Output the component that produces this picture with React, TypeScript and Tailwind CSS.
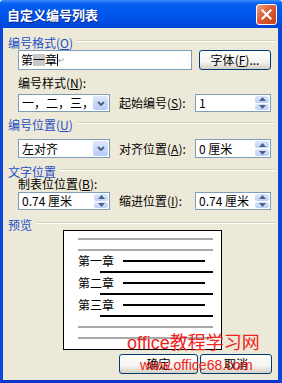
import React from "react"

type Mn = { text: string; k?: string; colon?: boolean }

const Label = ({ text, k, colon }: Mn) => (
  <span className="whitespace-nowrap text-[12px] leading-none">
    {text}
    {k && (
      <>
        (<u>{k}</u>)
      </>
    )}
    {colon && ":"}
  </span>
)

const GroupHead = ({ text, k }: Mn) => (
  <div className="flex h-full items-center pl-[5px] pr-[3px]">
    <span className="text-[#1c4ec6]">
      <Label text={text} k={k} />
    </span>
    <div className="ml-[4px] h-[2px] flex-1 border-t border-b border-t-[#d2cfbd] border-b-white" />
  </div>
)

const Arrow = ({ up }: { up?: boolean }) => (
  <svg width="7" height="4" viewBox="0 0 7 4">
    <path d={up ? "M0 4 L3.5 0 L7 4 Z" : "M0 0 L3.5 4 L7 0 Z"} fill="#4d6185" />
  </svg>
)

const Spin = ({ value, w }: { value: string; w: string }) => (
  <div className={`flex h-full border border-[#7f9db9] bg-white ${w}`}>
    <span className="flex flex-1 items-center pl-[3px] text-[12px] leading-none">{value}</span>
    <div className="m-[1px] flex w-[14px] flex-col gap-[1px]">
      <div className="flex flex-1 items-center justify-center rounded-[2px] bg-[linear-gradient(180deg,#dce6fd,#bcd0f9)]">
        <Arrow up />
      </div>
      <div className="flex flex-1 items-center justify-center rounded-[2px] bg-[linear-gradient(180deg,#dce6fd,#bcd0f9)]">
        <Arrow />
      </div>
    </div>
  </div>
)

const Select = ({ value }: { value: string }) => (
  <div className="flex h-full w-[92px] border border-[#7f9db9] bg-white">
    <span className="flex flex-1 items-center overflow-hidden whitespace-nowrap pl-[3px] text-[12px] leading-none">
      {value}
    </span>
    <div className="m-[1px] flex w-[15px] items-center justify-center rounded-[2px] bg-[linear-gradient(180deg,#dfe8fd,#b7cbf7)]">
      <svg width="8" height="5" viewBox="0 0 8 5">
        <path d="M1 1 L4 4 L7 1" stroke="#4d6185" strokeWidth="2" fill="none" />
      </svg>
    </div>
  </div>
)

const Btn = ({ children, w }: { children: React.ReactNode; w: string }) => (
  <div
    className={`flex h-full items-center justify-center rounded-[3px] border border-[#003c74] bg-[linear-gradient(180deg,#ffffff,#f3f3ef_60%,#d6d0c5)] text-[12px] leading-none ${w}`}
  >
    {children}
  </div>
)

const Row = ({ children, cls }: { children: React.ReactNode; cls: string }) => (
  <div className={`flex pl-[15px] ${cls}`}>{children}</div>
)

export default function App() {
  return (
    <div className="relative flex h-[383px] w-[282px] flex-col overflow-hidden bg-white font-['Noto_Sans_CJK_SC',sans-serif] text-black">
      {/* title bar */}
      <div className="flex h-[28px] shrink-0 items-center rounded-t-[3px] bg-[linear-gradient(180deg,#3d8dfb_0%,#0a62f2_12%,#0058ee_35%,#0052e8_70%,#0043d4_100%)] pl-[7px] pr-[5px]">
        <span className="flex-1 text-[13px] font-bold leading-none text-white [text-shadow:1px_1px_#0b2a8c]">
          自定义编号列表
        </span>
        <div className="flex h-[21px] w-[21px] items-center justify-center rounded-[3px] border border-white bg-[linear-gradient(135deg,#f0a487,#dd5b35_45%,#c43d17)]">
          <svg width="11" height="11" viewBox="0 0 11 11">
            <path d="M1.5 1.5 L9.5 9.5 M9.5 1.5 L1.5 9.5" stroke="white" strokeWidth="2.2" strokeLinecap="square" />
          </svg>
        </div>
      </div>

      {/* body */}
      <div className="flex flex-1 flex-col border-x-[3px] border-b-[3px] border-x-[#0a47d8] border-b-[#0835cc] border-r-[4px] bg-[#ece9d8]">
        <div className="mt-[6px] h-[14px]">
          <GroupHead text="编号格式" k="O" />
        </div>
        <Row cls="mt-[2px] h-[20px]">
          <div className="flex h-full w-[174px] items-center border border-[#7f9db9] bg-white pl-[2px] text-[12px] leading-none">
            <span>第</span>
            <span className="bg-[#c8c8c8]">一</span>
            <span>章</span>
            <span className="h-[12px] w-[1px] bg-black" />
            <span className="text-[8px] text-[#9a9a9a]">↵</span>
          </div>
          <div className="ml-[7px] h-full">
            <Btn w="w-[72px]">
              <Label text="字体" k="F" />
              ...
            </Btn>
          </div>
        </Row>
        <Row cls="mt-[6px] h-[13px] items-center">
          <Label text="编号样式" k="N" colon />
        </Row>
        <Row cls="mt-[5px] h-[18px]">
          <Select value="一，二，三，四" />
          <div className="flex w-[85px] items-center pl-[9px]">
            <Label text="起始编号" k="S" colon />
          </div>
          <Spin value="1" w="w-[76px]" />
        </Row>
        <div className="mt-[4px] h-[14px]">
          <GroupHead text="编号位置" k="U" />
        </div>
        <Row cls="mt-[9px] h-[19px]">
          <Select value="左对齐" />
          <div className="flex w-[85px] items-center pl-[9px]">
            <Label text="对齐位置" k="A" colon />
          </div>
          <Spin value="0 厘米" w="w-[76px]" />
        </Row>
        <div className="mt-[5px] h-[13px]">
          <GroupHead text="文字位置" />
        </div>
        <Row cls="mt-[1px] h-[13px] items-center">
          <Label text="制表位位置" k="B" colon />
        </Row>
        <Row cls="mt-[2px] h-[18px]">
          <Spin value="0.74 厘米" w="w-[92px]" />
          <div className="flex w-[85px] items-center pl-[9px]">
            <Label text="缩进位置" k="I" colon />
          </div>
          <Spin value="0.74 厘米" w="w-[76px]" />
        </Row>
        <div className="mt-[5px] h-[15px]">
          <GroupHead text="预览" />
        </div>

        {/* preview */}
        <div className="ml-[60px] flex h-[120px] w-[159px] flex-col border border-black bg-white pt-[2px]">
          <div className="flex h-[11px] items-center pl-[14px]">
            <div className="h-[2px] w-[135px] bg-[#a9a9a9]" />
          </div>
          <div className="flex h-[11px] items-center pl-[14px]">
            <div className="h-[2px] w-[135px] bg-[#a9a9a9]" />
          </div>
          {["第一章", "第二章", "第三章"].map((t) => (
            <React.Fragment key={t}>
              <div className="flex h-[11px] items-center pl-[14px]">
                <span className="w-[45px] text-[12px] leading-none">{t}</span>
                <div className="h-[2px] w-[82px] bg-black" />
              </div>
              <div className="flex h-[11px] items-center pl-[36px]">
                <div className="h-[2px] w-[113px] bg-black" />
              </div>
            </React.Fragment>
          ))}
          <div className="flex h-[11px] items-center pl-[14px]">
            <div className="h-[2px] w-[135px] bg-[#a9a9a9]" />
          </div>
          <div className="flex h-[11px] items-center pl-[14px]">
            <div className="h-[2px] w-[135px] bg-[#a9a9a9]" />
          </div>
        </div>

        <div className="mt-[4px] flex h-[20px] gap-[2px] pl-[116px]">
          <Btn w="w-[79px]">确定</Btn>
          <Btn w="w-[72px]">取消</Btn>
        </div>
      </div>

      {/* watermark */}
      <div className="absolute left-[127px] top-[332px] whitespace-nowrap font-['Liberation_Sans','Noto_Sans_CJK_SC',sans-serif] text-[18px] leading-[22px] text-[#f0221b]">
        office教程学习网
      </div>
      <div className="absolute left-[140px] top-[357px] whitespace-nowrap font-['Liberation_Sans',sans-serif] text-[14px] leading-[16px] text-[#f0221b]">
        www.office68.com
      </div>
    </div>
  )
}
